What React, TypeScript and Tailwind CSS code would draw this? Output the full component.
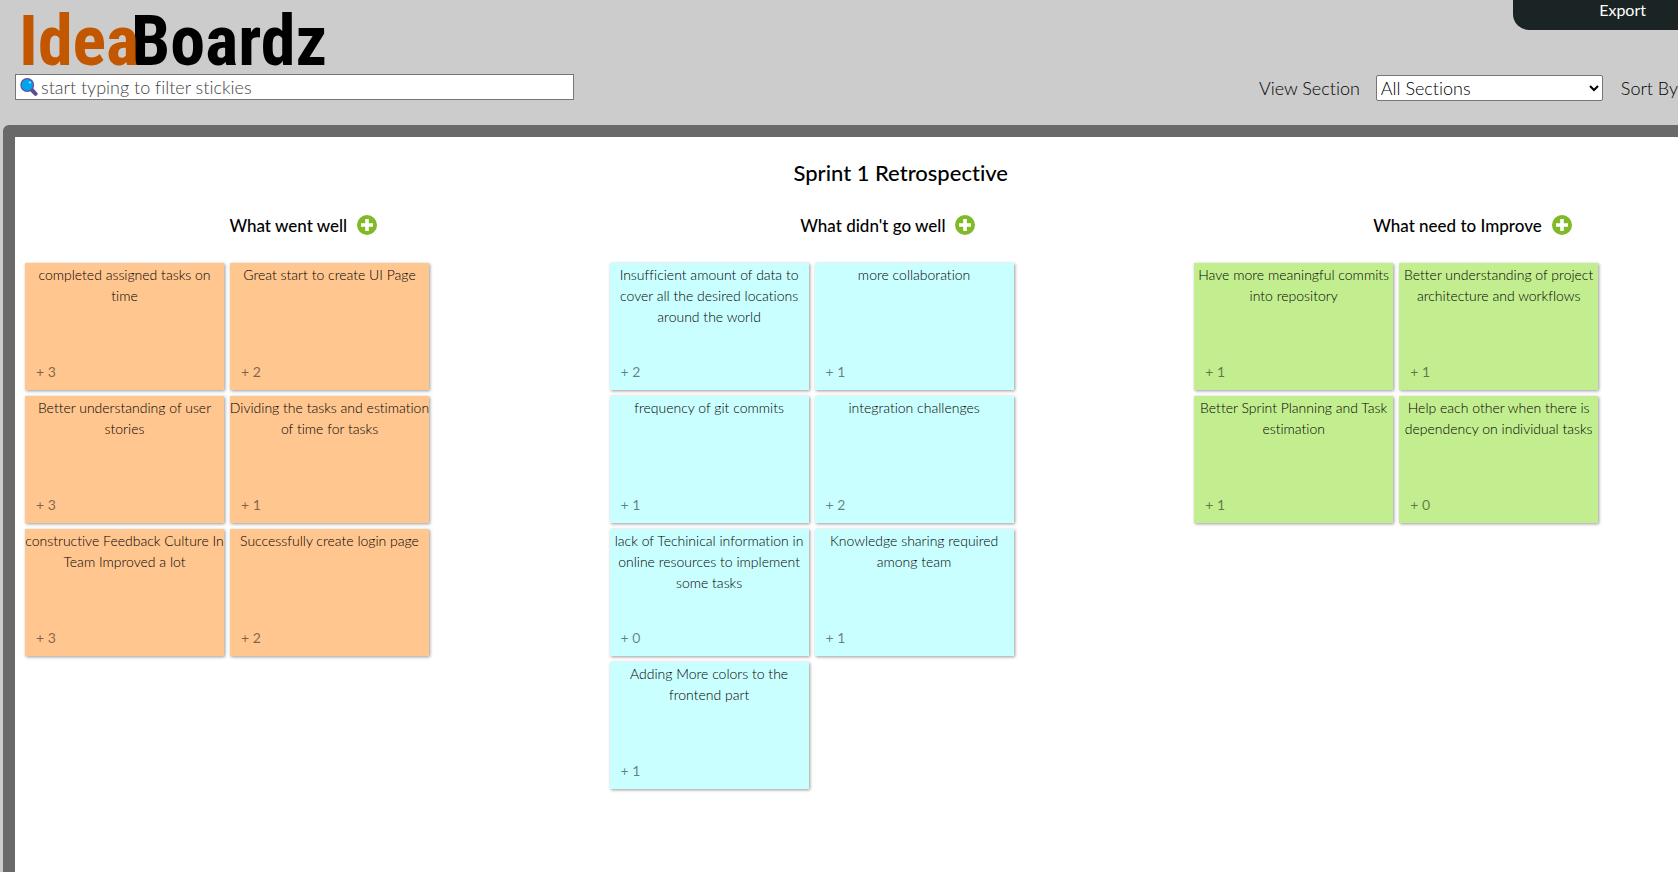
const palette = {
  peach: "bg-[#ffc68f]",
  cyan: "bg-[#caffff]",
  lime: "bg-[#c3ee8f]",
};

type Note = { text: string; votes: number };
type Section = { title: string; tone: keyof typeof palette; notes: Note[] };

const sections: Section[] = [
  {
    title: "What went well",
    tone: "peach",
    notes: [
      { text: "completed assigned tasks on time", votes: 3 },
      { text: "Great start to create UI Page", votes: 2 },
      { text: "Better understanding of user stories", votes: 3 },
      { text: "Dividing the tasks and estimation of time for tasks", votes: 1 },
      { text: "constructive Feedback Culture In Team Improved a lot", votes: 3 },
      { text: "Successfully create login page", votes: 2 },
    ],
  },
  {
    title: "What didn't go well",
    tone: "cyan",
    notes: [
      { text: "Insufficient amount of data to cover all the desired locations around the world", votes: 2 },
      { text: "more collaboration", votes: 1 },
      { text: "frequency of git commits", votes: 1 },
      { text: "integration challenges", votes: 2 },
      { text: "lack of Techinical information in online resources to implement some tasks", votes: 0 },
      { text: "Knowledge sharing required among team", votes: 1 },
      { text: "Adding More colors to the frontend part", votes: 1 },
    ],
  },
  {
    title: "What need to Improve",
    tone: "lime",
    notes: [
      { text: "Have more meaningful commits into repository", votes: 1 },
      { text: "Better understanding of project architecture and workflows", votes: 1 },
      { text: "Better Sprint Planning and Task estimation", votes: 1 },
      { text: "Help each other when there is dependency on individual tasks", votes: 0 },
    ],
  },
];

function SearchIcon() {
  return (
    <svg viewBox="0 0 18 18" className="pointer-events-none absolute left-[5px] top-1 size-[18px]" aria-hidden="true">
      <path d="M11.5 11.5 15.6 15.8" stroke="#5c4f96" strokeWidth="4" strokeLinecap="round" />
      <circle cx="7.2" cy="7" r="6.3" fill="#00a4ef" stroke="#5c4f96" strokeWidth="1.2" />
      <circle cx="9.8" cy="4.4" r="0.9" fill="#d6f3ff" />
    </svg>
  );
}

function PlusIcon() {
  return (
    <svg viewBox="0 0 20 20" className="size-5" aria-hidden="true">
      <circle cx="10" cy="10" r="10" fill="#80ba27" />
      <path d="M10 4v12M4 10h12" stroke="#fff" strokeWidth="3.6" />
    </svg>
  );
}

function Sticky({ note, tone }: { note: Note; tone: keyof typeof palette }) {
  return (
    <li className={`${palette[tone]} flex h-[127px] w-[199px] flex-col justify-between shadow-[1px_1px_3px_rgba(0,0,0,0.4)]`}>
      <p className="-mx-px pt-px text-center text-sm leading-[21px] font-light text-black">{note.text}</p>
      <button type="button" className="mb-2 ml-[11px] self-start text-sm text-black/50">
        + {note.votes}
      </button>
    </li>
  );
}

function Column({ section }: { section: Section }) {
  return (
    <section className="w-[33%] shrink-0 px-2.5">
      <div className="flex h-6 items-center justify-center gap-2.5 pr-2">
        <h2 className="pt-0.5 text-[17px] leading-6 font-medium">{section.title}</h2>
        <button type="button" aria-label={`Add a sticky to ${section.title}`}>
          <PlusIcon />
        </button>
      </div>
      <ul className="mt-[26px] flex max-w-[420px] flex-wrap gap-1.5">
        {section.notes.map((note) => (
          <Sticky key={note.text} note={note} tone={section.tone} />
        ))}
      </ul>
    </section>
  );
}

export default function App() {
  return (
    <div className="flex min-h-screen flex-col overflow-hidden bg-[#ccc] font-['Lato',sans-serif] text-black [font-variant-ligatures:none]">
      <header className="flex h-[125px] justify-between">
        <div className="box-content w-1/3 min-w-[340px] pl-[15px]">
          <a href="#" className="flex h-[74px] items-start pl-1 font-['Roboto_Condensed','Lato',sans-serif] text-[70px] leading-[82px] font-bold">
            <span className="relative z-10 text-[#c25700]">Idea</span>
            <span className="-ml-2">Boardz</span>
          </a>
          <div className="relative">
            <SearchIcon />
            <input
              type="text"
              aria-label="Filter stickies"
              placeholder="start typing to filter stickies"
              className="block h-[26px] w-full border border-[#767676] bg-white pl-[25px] text-lg leading-6 font-light placeholder:text-[#444]"
            />
          </div>
        </div>
        <div className="flex shrink-0 flex-col items-end justify-between pb-6">
          <div className="flex h-[30px] w-[165px] justify-end rounded-bl-2xl bg-[#1a2424] pr-8">
            <a href="#" className="text-base leading-5 text-white">Export</a>
          </div>
          <div className="flex h-[26px] items-center text-lg font-light">
            <label htmlFor="section">View Section</label>
            <select id="section" className="mr-[18px] ml-4 h-[26px] w-[227px] rounded-xs border border-[#767676] bg-white px-0">
              <option>All Sections</option>
            </select>
            <span>Sort By</span>
          </div>
        </div>
      </header>
      <main className="ml-[3px] w-[107%] grow rounded-tl-md border-12 border-[#696969] bg-[#696969]">
        <div className="h-full min-h-[735px] bg-white pt-5">
          <h1 className="text-center text-[22px] leading-8 font-medium">Sprint 1 Retrospective</h1>
          <div className="mt-6 flex">
            {sections.map((section) => (
              <Column key={section.title} section={section} />
            ))}
          </div>
        </div>
      </main>
    </div>
  );
}
